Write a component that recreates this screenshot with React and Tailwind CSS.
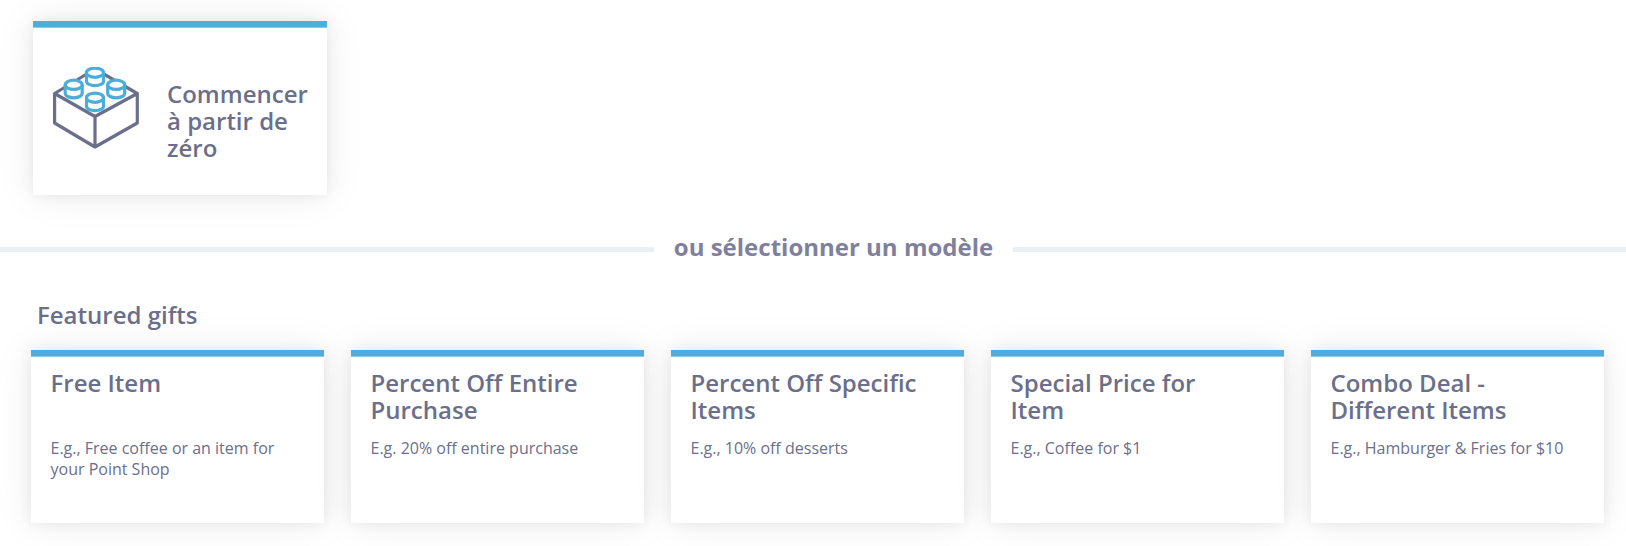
const gifts = [
  { title: 'Free Item', example: 'E.g., Free coffee or an item for your Point Shop' },
  { title: 'Percent Off Entire Purchase', example: 'E.g. 20% off entire purchase' },
  { title: 'Percent Off Specific Items', example: 'E.g., 10% off desserts' },
  { title: 'Special Price for Item', example: 'E.g., Coffee for $1' },
  { title: 'Combo Deal - Different Items', example: 'E.g., Hamburger & Fries for $10' },
];

const studs = [
  [42, 5.7],
  [20.7, 17.8],
  [63.2, 17.8],
  [42, 30.7],
];

function BrickIcon() {
  return (
    <svg className="h-[82px] w-[86px] shrink-0" viewBox="0 0 86 82" fill="none" strokeLinejoin="round">
      <path d="M42 2 84.3 26.5V56L42 80 1.6 56V26.5Z M1.6 26.5 42 49.5 84.3 26.5 M42 49.5V80" stroke="#6b6f8a" strokeWidth="3.2" />
      {studs.map(([x, y]) => (
        <g key={`${x}-${y}`} transform={`translate(${x} ${y})`} stroke="#4aaedb" strokeWidth="3.2">
          <path d="M-8.5 0V8.5C-8.5 11-4.7 13 0 13S8.5 11 8.5 8.5V0" fill="#fff" />
          <ellipse rx="8.5" ry="4.6" fill="#fff" />
        </g>
      ))}
    </svg>
  );
}

function AccentBar() {
  return <span className="block h-[7px] w-full border-b border-[#8ccbe8] bg-[#4caedc]" />;
}

function GiftCard({ title, example }) {
  return (
    <article className="h-[173px] w-[293px] bg-white shadow-[0_0_12px_rgba(0,0,0,0.07),0_0_38px_rgba(0,0,0,0.08)]">
      <AccentBar />
      <div className="pt-[12px] pr-5 pl-[19.5px]">
        <h3 className="h-[54px] pr-5 text-2xl/[27px] font-semibold">{title}</h3>
        <p className="mt-[15px] text-base/[21px]">{example}</p>
      </div>
    </article>
  );
}

export default function App() {
  return (
    <main className="h-[546px] w-[1626px] overflow-hidden bg-white pt-[21px] font-['Open_Sans',sans-serif] text-[#6b6f8a]">
      <button className="ml-[33px] block h-[174px] w-[294px] bg-white text-left shadow-[0_0_12px_rgba(0,0,0,0.07),0_0_38px_rgba(0,0,0,0.08)]">
        <AccentBar />
        <span className="flex h-[167px] items-start pl-5">
          <span className="mt-[39px]"><BrickIcon /></span>
          <span className="mt-[52px] ml-7 w-[150px] text-2xl/[27px] font-semibold">Commencer à partir de zéro</span>
        </span>
      </button>

      <div className="mt-[36px] flex h-8 items-center text-[#7f819c]">
        <div className="mt-[5px] h-[5px] w-[654px] bg-[#eaeff2]" />
        <h1 className="w-[359px] text-center text-2xl/8 font-bold whitespace-nowrap">ou sélectionner un modèle</h1>
        <div className="mt-[5px] h-[5px] flex-1 bg-[#eaeff2]" />
      </div>

      <section>
        <h2 className="mt-[36px] ml-[37px] h-8 text-2xl/8 font-semibold">Featured gifts</h2>
        <div className="mt-[19px] ml-[31px] flex gap-[27px]">
          {gifts.map((gift) => <GiftCard key={gift.title} {...gift} />)}
        </div>
      </section>
    </main>
  );
}
